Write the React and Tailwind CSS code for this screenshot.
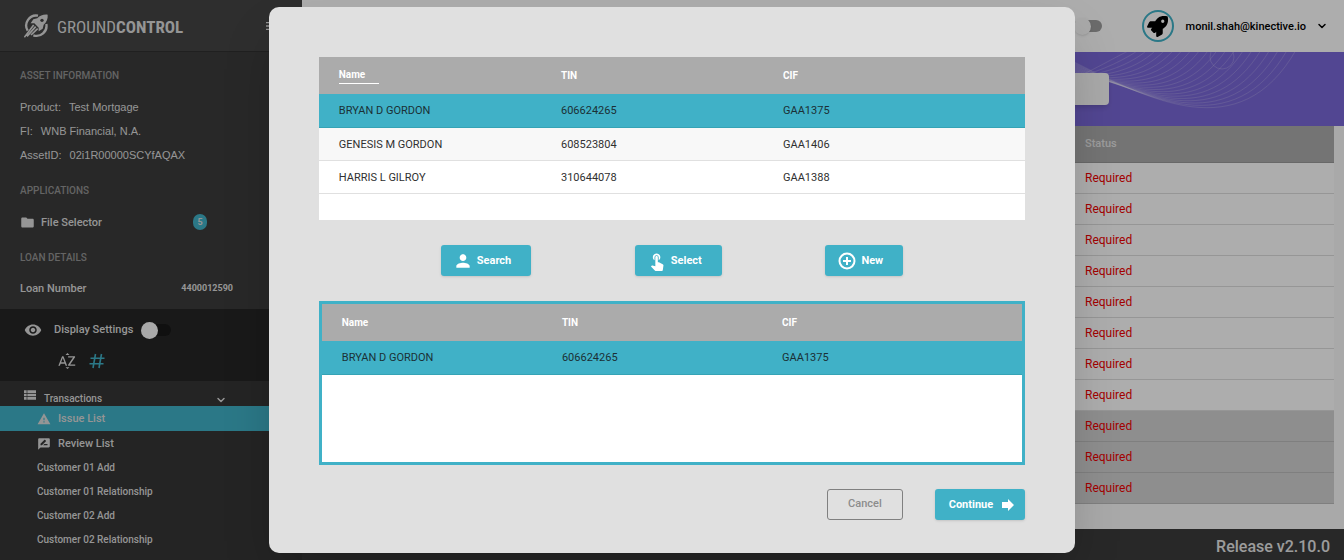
import React, { useState } from 'react';
import { ChevronDown } from 'lucide-react';
import { FaRocket } from 'react-icons/fa';
import {
  MdFolder,
  MdRemoveRedEye,
  MdWarning,
  MdRateReview,
  MdPerson,
  MdTouchApp,
  MdViewList,
  MdSortByAlpha,
  MdMenu,
} from 'react-icons/md';

const assetInfo = [
  { label: 'Product:', value: 'Test Mortgage' },
  { label: 'FI:', value: 'WNB Financial, N.A.' },
  { label: 'AssetID:', value: '02i1R00000SCYfAQAX' },
];

const customerLinks = [
  'Customer 01 Add',
  'Customer 01 Relationship',
  'Customer 02 Add',
  'Customer 02 Relationship',
];

const people = [
  { name: 'BRYAN D GORDON', tin: '606624265', cif: 'GAA1375' },
  { name: 'GENESIS M GORDON', tin: '608523804', cif: 'GAA1406' },
  { name: 'HARRIS L GILROY', tin: '310644078', cif: 'GAA1388' },
];

const issues = [
  { id: 1, dark: false },
  { id: 2, dark: false },
  { id: 3, dark: false },
  { id: 4, dark: false },
  { id: 5, dark: false },
  { id: 6, dark: false },
  { id: 7, dark: false },
  { id: 8, dark: false },
  { id: 9, dark: true },
  { id: 10, dark: true },
  { id: 11, dark: true },
];

const RocketLogo = () => (
  <svg viewBox="0 0 72 72" className="h-6 w-6 shrink-0" fill="none" stroke="#dcdcdc">
    <path d="M42 5A30 30 0 0 0 11 50M67 30A30 30 0 0 1 28 64" strokeWidth="7" />
    <path
      d="M71 2C58 1 48 4 40 13L28 16L20 28L31 28L44 41L44 52L56 44L59 32C68 24 72 14 71 2z"
      fill="#dcdcdc"
      stroke="none"
    />
    <circle cx="54" cy="19" r="5" fill="#454545" stroke="none" />
    <path d="M29 33L1 70M35 38L9 67M41 44L21 63" strokeWidth="5" />
  </svg>
);

const HashIcon = () => (
  <svg viewBox="0 0 16 16" className="h-4 w-4" fill="none" stroke="currentColor" strokeWidth="1.600">
    <path d="M6.500 1L4 15M12.500 1L10 15M1.500 5.200h14M.5 10.800h14" />
  </svg>
);

const PlusCircle = () => (
  <svg viewBox="0 0 20 20" className="h-5 w-5" fill="none" stroke="currentColor" strokeWidth="2">
    <circle cx="10" cy="10" r="7.500" />
    <path d="M10 6v8M6 10h8" />
  </svg>
);

const ArrowBlock = () => (
  <svg viewBox="0 0 14 12" className="h-3 w-3.5" fill="currentColor">
    <path d="M1 3h6V0l6 6-6 6V9H1z" />
  </svg>
);

// Lines fan out between a shallow curve and a deep one
const Waves = () => (
  <svg
    viewBox="0 0 260 74"
    className="absolute right-6 top-0 h-full w-[260px]"
    fill="none"
    stroke="#fff"
    strokeOpacity="0.18"
  >
    {[...Array(20).keys()].map((i) => {
      const f = i / 19;
      const mix = (a, b) => a + (b - a) * f;
      return (
        <path
          key={i}
          d={`M10 ${mix(28, 8)}C${mix(30, 90)} ${mix(20, 48)} ${mix(50, 180)} ${mix(8, 96)} ${mix(70, 236)} -2`}
        />
      );
    })}
    <circle cx="162" cy="5" r="12" />
  </svg>
);

const Sidebar = () => {
  const [showDisplay, setShowDisplay] = useState(false);

  return (
    <aside className="w-[302px] shrink-0 bg-[#353535] text-[#dcdcdc]">
      <div className="flex h-[52px] items-center border-b border-[#303030] bg-[#454545] pr-[22px] pl-6">
        <RocketLogo />
        <span className="ml-[9px] pt-1 font-['Roboto_Condensed','Roboto',sans-serif] text-[17px] text-[#dcdcdc]">
          GROUND<b>CONTROL</b>
        </span>
        <button type="button" aria-label="Toggle menu" className="ml-auto">
          <MdMenu size={16} />
        </button>
      </div>

      <div className="bg-[#3c3c3c] px-5 pt-4 pb-[5px] text-[11px]">
        <h2 className="text-[10px] leading-4 font-medium text-[#949494]">ASSET INFORMATION</h2>
        <div className="pt-[11px] font-['Liberation_Sans',sans-serif]">
          {assetInfo.map((item) => (
            <div key={item.label} className="flex h-6 items-center gap-2">
              <span>{item.label}</span>
              <span>{item.value}</span>
            </div>
          ))}
        </div>
        <h2 className="mt-4 text-[10px] leading-4 font-medium text-[#949494]">APPLICATIONS</h2>
        <a href="#files" className="mt-[7px] flex h-8 items-center leading-[19px] font-medium">
          <MdFolder size={15} />
          <span className="ml-1.5">File Selector</span>
          <span className="mr-[75px] ml-auto flex h-4 w-3.5 items-center justify-center rounded-full bg-[#40b1c7] text-[9px] font-bold">
            5
          </span>
        </a>
        <h2 className="mt-3 text-[10px] leading-4 font-medium text-[#949494]">LOAN DETAILS</h2>
        <div className="mt-1.5 flex h-8 items-center justify-between pr-[49px] leading-[19px]">
          <span className="font-medium">Loan Number</span>
          <span className="text-[9px] font-bold">4400012590</span>
        </div>
      </div>

      <div className="h-[72px] bg-[#262626] pt-[9px] pl-6">
        <label className="flex h-6 items-center text-[11px] leading-[18px]">
          <MdRemoveRedEye size={18} />
          <span className="ml-3 font-medium">Display Settings</span>
          <input
            type="checkbox"
            className="peer sr-only"
            checked={showDisplay}
            onChange={() => setShowDisplay(!showDisplay)}
          />
          <span className="ml-2 flex h-3 w-[30px] items-center rounded-full bg-[#181818]">
            <span className="h-[17px] w-[17px] shrink-0 rounded-full bg-[#fafafa]" />
          </span>
        </label>
        <div className="flex h-[38px] items-center gap-3 pl-[33px]">
          <button type="button" aria-label="Sort by name">
            <MdSortByAlpha size={20} />
          </button>
          <button type="button" aria-label="Sort by number" className="text-[#40b1c7]">
            <HashIcon />
          </button>
        </div>
      </div>

      <nav className="text-[11px] leading-[17px]">
        <button
          type="button"
          className="flex h-[25px] w-full pt-1.5 pl-[22px] text-left text-[10px] leading-[15px] font-medium"
        >
          <MdViewList size={16} />
          <span className="ml-1.5 self-end">Transactions</span>
          <ChevronDown size={12} strokeWidth={3} className="mr-[75px] ml-auto self-end" />
        </button>
        <a href="#issues" className="flex h-[25px] items-center bg-[#40b1c7] pl-[37px] font-medium">
          <MdWarning size={14} />
          <span className="ml-[7px]">Issue List</span>
        </a>
        <a href="#review" className="flex h-[25px] items-center pl-[37px] font-medium">
          <MdRateReview size={14} />
          <span className="ml-[7px]">Review List</span>
        </a>
        {customerLinks.map((name) => (
          <a key={name} href="#customer" className="flex h-6 items-center pl-[37px] text-[10px] leading-4 font-medium">
            {name}
          </a>
        ))}
      </nav>
    </aside>
  );
};

const TopBar = () => (
  <header className="flex h-[52px] items-center justify-end bg-white pr-4">
    <label className="mr-10 flex h-3 w-7 items-center rounded-full bg-[#9e9e9e]">
      <input type="checkbox" aria-label="Toggle view" className="sr-only" />
      <span className="h-[17px] w-[17px] rounded-full bg-[#fafafa] shadow" />
    </label>
    <span className="flex h-8 w-8 items-center justify-center rounded-full border-2 border-[#40b1c7] text-black">
      <FaRocket size={21} />
    </span>
    <button type="button" className="ml-3 flex items-center gap-2.5 text-[11px] leading-[19px] font-medium text-black">
      monil.shah@kinective.io
      <ChevronDown size={12} strokeWidth={3} />
    </button>
  </header>
);

const IssuePage = () => (
  <main className="min-w-0 flex-1 bg-[#fafafa]">
    <TopBar />
    <div className="relative flex h-[74px] items-center justify-end bg-[#7a68d8]">
      <Waves />
      <button
        type="button"
        aria-label="Actions"
        className="relative mr-[235px] h-8 w-40 rounded bg-[#fafafa] shadow-md"
      />
    </div>
    <div className="pr-2.5">
      <table className="w-full border-collapse text-left">
        <thead>
          <tr className="h-9 border-b border-[#9a9a9a] bg-[#ababab] text-[11px] text-[#e6e6e6]">
            <th className="font-medium">Issue</th>
            <th className="w-[249px] font-medium">Status</th>
          </tr>
        </thead>
        <tbody className="text-xs">
          {issues.map((issue) => (
            <tr
              key={issue.id}
              className={`h-[31px] border-b ${issue.dark ? 'border-[#bcbcbc] bg-[#d2d2d2]' : 'border-[#dedede] bg-white'}`}
            >
              <td />
              <td className="text-[#f00000]">Required</td>
            </tr>
          ))}
        </tbody>
      </table>
    </div>
  </main>
);

const PersonTable = ({ rows, sorted }) => (
  <table className="w-full table-fixed border-collapse text-left">
    <thead>
      <tr className="h-[37px] bg-[#ababab] text-[10px] text-white">
        <th className="w-12/35 pl-5 font-bold">
          {sorted ? (
            <span className="inline-block w-10 border-b border-white leading-4">Name</span>
          ) : (
            'Name'
          )}
        </th>
        <th className="w-11/35 font-bold">TIN</th>
        <th className="font-bold">CIF</th>
      </tr>
    </thead>
    <tbody className="text-[11px] leading-[18px] text-[#303030]">
      {rows.map((row, i) => (
        <tr
          key={row.tin}
          className={`h-[33px] border-b ${
            i === 0
              ? 'border-[#35a3b5] bg-[#40b1c7] text-[#1b3035]'
              : i === 1
                ? 'border-[#e0e0e0] bg-[#f8f8f8]'
                : 'border-[#e0e0e0] bg-white'
          }`}
        >
          <td className="pt-0.5 pl-5">{row.name}</td>
          <td className="pt-0.5">{row.tin}</td>
          <td className="pt-0.5">{row.cif}</td>
        </tr>
      ))}
    </tbody>
  </table>
);

const ActionButton = ({ icon, children }) => (
  <button
    type="button"
    className="flex h-[31px] items-center gap-1 rounded-[3px] bg-[#40b1c7] pr-5 pl-3 text-[11px] leading-[19px] font-bold text-white shadow"
  >
    {icon}
    {children}
  </button>
);

const PersonDialog = () => (
  <div
    role="dialog"
    aria-label="Select person"
    className="w-3/5 rounded-[10px] bg-[#e0e0e0] px-[50px] pt-[50px] pb-[33px] shadow-2xl"
  >
    <div className="h-[163px] bg-white">
      <PersonTable rows={people} sorted />
    </div>
    <div className="flex justify-between px-[122px] py-[25px]">
      <ActionButton icon={<MdPerson size={20} />}>Search</ActionButton>
      <ActionButton icon={<MdTouchApp size={20} />}>Select</ActionButton>
      <ActionButton icon={<PlusCircle />}>New</ActionButton>
    </div>
    <div className="h-[164px] border-3 border-[#40b1c7] bg-white">
      <PersonTable rows={people.slice(0, 1)} />
    </div>
    <div className="mt-6 flex justify-end gap-8">
      <button
        type="button"
        className="h-[31px] rounded-[3px] border border-[#808080] px-5 text-[11px] font-medium text-[#8c8c8c]"
      >
        Cancel
      </button>
      <button
        type="button"
        className="flex h-[31px] items-center gap-2 rounded-[3px] bg-[#40b1c7] pr-2.5 pl-3.5 text-[11px] leading-[19px] font-bold text-white shadow"
      >
        Continue
        <ArrowBlock />
      </button>
    </div>
  </div>
);

export default function App() {
  return (
    <div className="relative flex h-screen flex-col overflow-hidden font-['Roboto',sans-serif]">
      <div className="flex min-h-0 flex-1">
        <Sidebar />
        <div className="flex min-w-0 flex-1 flex-col">
          <div className="flex min-h-0 flex-1 overflow-hidden">
            <IssuePage />
          </div>
          <footer className="flex h-[31px] items-center justify-end bg-[#3b3b3b] pt-1 pr-3.5 text-base font-medium text-[#e6e6e6]">
            Release v2.10.0
          </footer>
        </div>
      </div>

      {/* Backdrop */}
      <div className="absolute inset-0 flex items-center justify-center bg-black/32">
        <PersonDialog />
      </div>
    </div>
  );
}
